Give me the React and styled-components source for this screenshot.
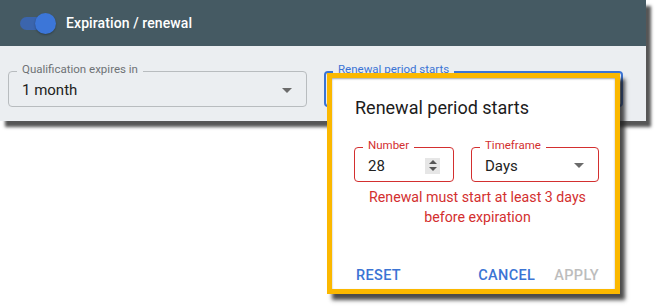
import React from "react";
import styled, { createGlobalStyle } from "styled-components";

const Global = createGlobalStyle`
  html, body { margin: 0; padding: 0; background: #ffffff; }
  body { font-family: Roboto, "Noto Sans", Arial, sans-serif; }
  * { box-sizing: border-box; }
`;

const Stage = styled.div`
  position: relative;
  width: 657px;
  height: 308px;
  overflow: hidden;
`;

const Panel = styled.div`
  width: 646px;
  background: #ebeef1;
  box-shadow: 5px 6px 3px rgba(30, 30, 30, 0.75);
`;

const Header = styled.div`
  height: 46px;
  background: #455a63;
  display: flex;
  align-items: center;
  padding-left: 20px;
  gap: 14px;
`;

const Toggle = styled.div`
  position: relative;
  width: 32px;
  height: 13px;
  border-radius: 7px;
  background: #3b65ad;
  &::after {
    content: "";
    position: absolute;
    right: -4px;
    top: -4px;
    width: 21px;
    height: 21px;
    border-radius: 50%;
    background: #3c76d8;
    box-shadow: 0 1px 2px rgba(0, 0, 0, 0.3);
  }
`;

const HeaderTitle = styled.div`
  color: #ffffff;
  font-size: 14px;
  font-weight: 500;
  letter-spacing: 0.1px;
`;

const Body = styled.div`
  display: flex;
  gap: 17px;
  padding: 25px 23px 14px 8px;
`;

const Field = styled.div`
  position: relative;
  width: ${(p) => p.$w}px;
  height: ${(p) => p.$h || 36}px;
  border: ${(p) => (p.$focus ? 2 : 1)}px solid ${(p) => p.$color};
  border-radius: 4px;
  display: flex;
  align-items: center;
  padding-left: ${(p) => (p.$focus ? 12 : 13)}px;
  padding-right: 14px;
  justify-content: space-between;
`;

const Legend = styled.span`
  position: absolute;
  left: ${(p) => (p.$focus ? 7 : 8)}px;
  top: ${(p) => (p.$focus ? -10 : -9)}px;
  padding: 0 5px;
  background: ${(p) => p.$bg};
  color: ${(p) => p.$color};
  font-size: 11.5px;
  line-height: 13px;
  white-space: nowrap;
`;

const Value = styled.span`
  font-size: 15px;
  color: #222222;
  padding-top: 2px;
`;

const Caret = styled.span`
  width: 0;
  height: 0;
  border-left: 5px solid transparent;
  border-right: 5px solid transparent;
  border-top: 5px solid #6b6b6b;
  margin-top: 2px;
`;

const Spinner = styled.div`
  width: 15px;
  height: 16px;
  background: #e6e6e6;
  display: flex;
  flex-direction: column;
  align-items: center;
  justify-content: center;
  gap: 3px;
  margin-top: 2px;
  margin-right: -1px;
`;

const Tri = styled.span`
  width: 0;
  height: 0;
  border-left: 4px solid transparent;
  border-right: 4px solid transparent;
  ${(p) => (p.$up ? "border-bottom: 4px solid #555;" : "border-top: 4px solid #555;")}
`;

const Popup = styled.div`
  position: absolute;
  left: 327px;
  top: 73px;
  width: 293px;
  height: 221px;
  border: 5px solid #fbb800;
  background: #ffffff;
  box-shadow: 5px 6px 4px rgba(30, 30, 30, 0.8), inset 0 1px 2px rgba(0, 0, 0, 0.35);
  display: flex;
  flex-direction: column;
  padding: 18px 16px 0 22px;
`;

const PopTitle = styled.div`
  font-size: 18px;
  line-height: 24px;
  color: #1c1c1c;
  padding-left: 1px;
`;

const Row = styled.div`
  display: flex;
  gap: 17px;
  margin-top: 27px;
`;

const ErrorText = styled.div`
  margin-top: 5px;
  color: #d32f2f;
  font-size: 14.2px;
  line-height: 20px;
  text-align: center;
  padding-left: 2px;
`;

const Actions = styled.div`
  margin-top: auto;
  height: 32px;
  display: flex;
  align-items: center;
  gap: 19px;
  margin-bottom: -2px;
  margin-left: 2px;
`;

const Btn = styled.span`
  font-size: 14.5px;
  font-weight: 500;
  letter-spacing: 0.35px;
  color: ${(p) => (p.$disabled ? "#bdbdbd" : "#3b74d4")};
  ${(p) => p.$push && "margin-left: auto;"}
`;

export default function App() {
  return (
    <>
      <Global />
      <Stage>
        <Panel>
          <Header>
            <Toggle />
            <HeaderTitle>Expiration / renewal</HeaderTitle>
          </Header>
          <Body>
            <Field $w={299} $color="#b8bcbf">
              <Legend $bg="#ebeef1" $color="#6e7275">Qualification expires in</Legend>
              <Value>1 month</Value>
              <Caret />
            </Field>
            <Field $w={299} $color="#3b74d4" $focus>
              <Legend $bg="#ebeef1" $color="#3b74d4" $focus>Renewal period starts</Legend>
            </Field>
          </Body>
        </Panel>
        <Popup>
          <PopTitle>Renewal period starts</PopTitle>
          <Row>
            <Field $w={100} $h={35} $color="#d32f2f">
              <Legend $bg="#ffffff" $color="#d32f2f">Number</Legend>
              <Value>28</Value>
              <Spinner>
                <Tri $up />
                <Tri />
              </Spinner>
            </Field>
            <Field $w={128} $h={35} $color="#d32f2f">
              <Legend $bg="#ffffff" $color="#d32f2f">Timeframe</Legend>
              <Value>Days</Value>
              <Caret />
            </Field>
          </Row>
          <ErrorText>
            Renewal must start at least 3 days
            <br />
            before expiration
          </ErrorText>
          <Actions>
            <Btn>RESET</Btn>
            <Btn $push>CANCEL</Btn>
            <Btn $disabled>APPLY</Btn>
          </Actions>
        </Popup>
      </Stage>
    </>
  );
}
